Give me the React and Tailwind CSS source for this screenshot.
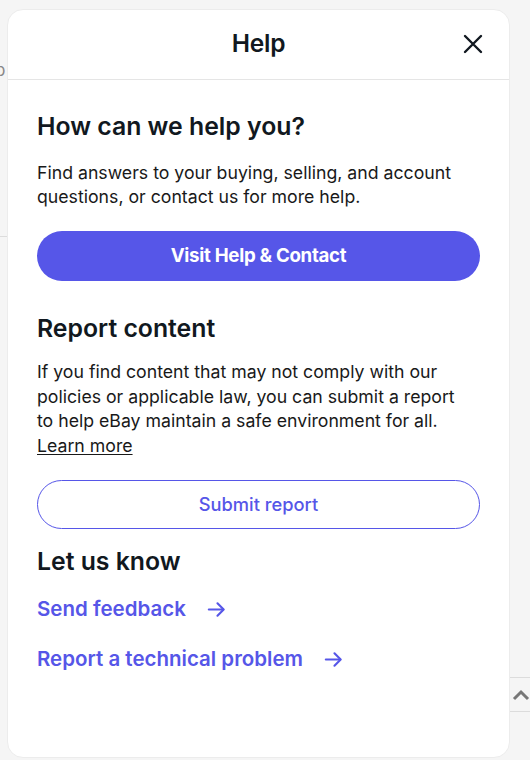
import React from "react";

const Arrow = () => (
  <svg width="23" height="23" viewBox="0 0 24 24" fill="none" stroke="currentColor" strokeWidth="2.2" strokeLinecap="round" strokeLinejoin="round">
    <path d="M4 12h15" />
    <path d="M13 5.5l6.5 6.5-6.5 6.5" />
  </svg>
);

export default function App() {
  return (
    <div
      className="relative w-[530px] h-[760px] overflow-hidden bg-[#f5f5f5] text-[#111820]"
      style={{ fontFamily: "Inter, 'Open Sans', sans-serif" }}
    >
      {/* page behind the dialog */}
      <span className="absolute left-[-5px] top-[58px] text-[17px] text-[#888]">p</span>
      <div className="absolute left-0 top-[236px] w-[8px] h-px bg-[#dcdcdc]" />
      <div className="absolute right-0 top-[677px] w-[20px] h-px bg-[#dcdcdc]" />
      <div className="absolute right-0 top-[711px] w-[20px] h-px bg-[#dcdcdc]" />
      <svg className="absolute left-[512px] top-[688px]" width="18" height="14" viewBox="0 0 18 14">
        <path d="M2 11l7-7 7 7" fill="none" stroke="#777" strokeWidth="3" />
      </svg>

      {/* dialog */}
      <div className="absolute left-[7px] top-[9px] w-[503px] h-[749px] bg-white rounded-[16px] border border-[#ececec] flex flex-col">
        <div className="relative h-[70px] flex items-center justify-center border-b border-[#e5e5e5]">
          <h1 className="text-[24.5px] font-semibold tracking-[-0.2px] -mt-[2px]">Help</h1>
          <button className="absolute right-[26px] top-[24px] text-[#111820]">
            <svg width="20" height="20" viewBox="0 0 20 20" fill="none" stroke="currentColor" strokeWidth="2.4" strokeLinecap="round">
              <path d="M2 2l16 16M18 2L2 18" />
            </svg>
          </button>
        </div>

        <div className="px-[29px] pt-[30px] flex flex-col">
          <h2 className="text-[24.8px] font-semibold leading-[32px]">How can we help you?</h2>
          <p className="mt-[19px] text-[17.7px] leading-[24px] text-[#191919]">
            Find answers to your buying, selling, and account questions, or contact us for more help.
          </p>
          <button className="mt-[22px] h-[50px] w-full rounded-full bg-[#5656e8] text-white text-[18.7px] font-bold tracking-[-0.3px]">
            Visit Help &amp; Contact
          </button>

          <h2 className="mt-[31px] text-[24.8px] font-semibold leading-[32px]">Report content</h2>
          <p className="mt-[16px] max-w-[430px] text-[17.7px] leading-[24.5px] text-[#191919]">
            If you find content that may not comply with our policies or applicable law, you can submit a report to help eBay maintain a safe environment for all.
            <br />
            <a className="underline underline-offset-2">Learn more</a>
          </p>
          <button className="mt-[22px] h-[49px] w-full rounded-full border border-[#5656e8] text-[#5656e8] text-[18.3px] font-medium">
            Submit report
          </button>

          <h2 className="mt-[16px] text-[24.8px] font-semibold leading-[32px]">Let us know</h2>
          <a className="mt-[16px] flex items-center gap-[19px] text-[#5656e8] text-[20.5px] font-semibold leading-[32px]">
            Send feedback <Arrow />
          </a>
          <a className="mt-[18px] flex items-center gap-[19px] text-[#5656e8] text-[20.5px] font-semibold leading-[32px]">
            Report a technical problem <Arrow />
          </a>
        </div>
      </div>
    </div>
  );
}
